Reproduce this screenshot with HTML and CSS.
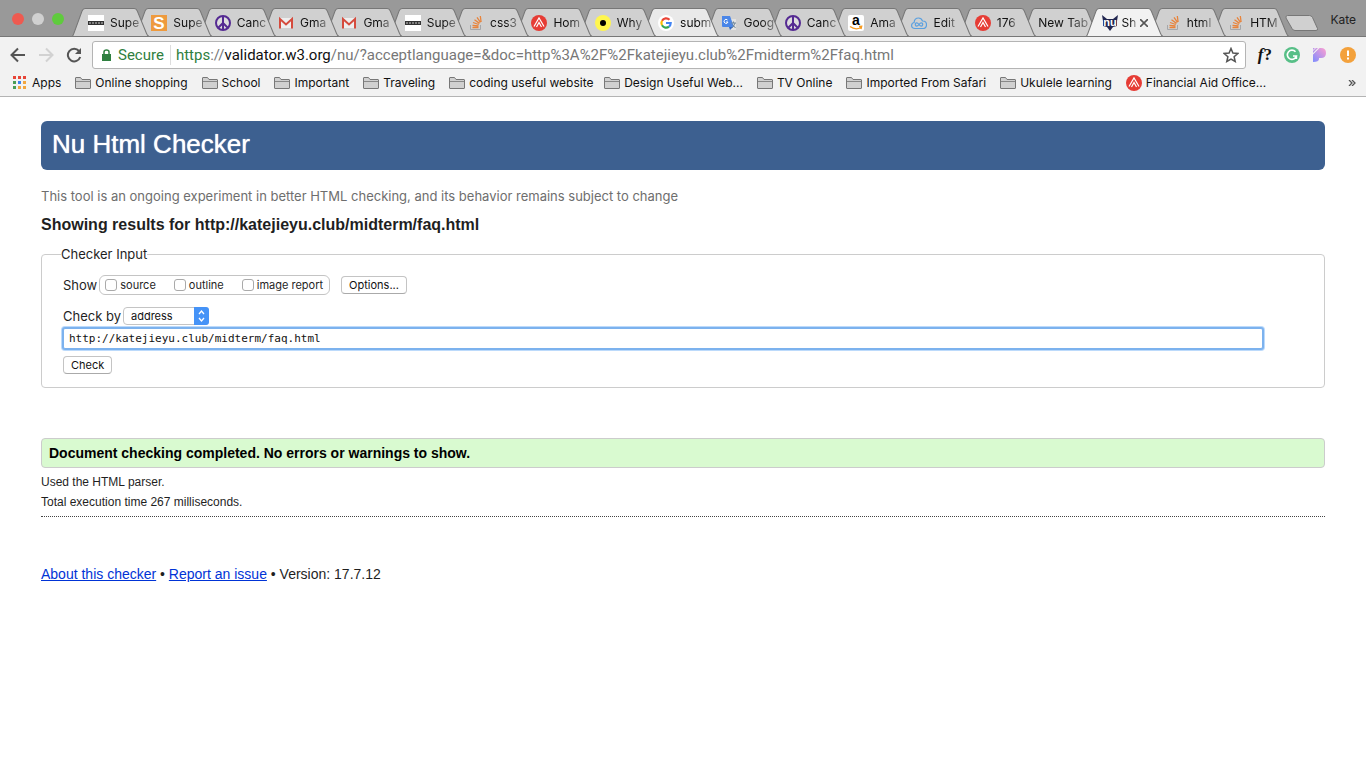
FILE: index.html
```html
<!DOCTYPE html>
<html lang="en">
<head>
<meta charset="utf-8">
<title>Showing results - Nu Html Checker</title>
<link rel="stylesheet" href="styles.css">
</head>
<body>
<svg class="defs" aria-hidden="true">
  <defs>
    <linearGradient id="pgrad" x1="1" y1="0" x2="0" y2="1"><stop offset="0" stop-color="#ff9fd0"/><stop offset="1" stop-color="#7d8cff"/></linearGradient>
    <symbol id="shape" viewBox="0 0 77 29" preserveAspectRatio="none"><path d="M0 28.500Q1 28 2 25L10 3Q11 .5 13 .5H62Q64 .5 65 3L74 25Q75 28 77 28.500Z"/></symbol>
    <symbol id="bars" viewBox="0 0 16 16"><path fill="#fff" d="M0 0h16v16H0z"/><path fill="#333" d="M0 6h16v4H0z"/><path stroke="#ccc" stroke-dasharray="2 1" d="M1 8h14"/></symbol>
    <symbol id="peace" viewBox="0 0 16 16"><circle cx="8" cy="8" r="7" fill="#ddd" stroke="#552a92" stroke-width="2"/><path d="M8 1v14M8 8l-5 5M8 8l5 5" stroke="#552a92" stroke-width="2" fill="none"/></symbol>
    <symbol id="gmail" viewBox="0 0 16 16"><path fill="#eee" d="M1 3h14v10H1z"/><path fill="none" stroke="#d54b3d" stroke-width="2" d="M2 13.500V4l6 5.500L14 4v9.500"/></symbol>
    <symbol id="stack" viewBox="0 0 16 16"><path fill="none" stroke="#a5a7aa" d="M2.500 10v4.500h10V10"/><path fill="none" stroke="#e8833a" stroke-width="1.300" d="M4.500 12.500h6M4.500 10.300l6 .7M5 7.500l5.800 2M6.500 4.800l5 3.600M9 2.300l3.500 5M12.300 1l.8 6"/></symbol>
    <symbol id="aau" viewBox="0 0 16 16"><circle cx="8" cy="8" r="8" fill="#e63c35"/><path d="M3 11.500L8 3l5 8.500M5.500 12L8 7.500l2.500 4.500" fill="none" stroke="#fff" stroke-width="1.200"/></symbol>
    <symbol id="folder" viewBox="0 0 16 14"><path fill="#d0d0d0" stroke="#777" d="M.5 12V2Q.5 1.500 1 1.500h4.500L7 3.500h8q.5 0 .5.500v8q0 .5-.5.500H1Q.5 12.500.5 12z"/><path stroke="#888" d="M1 5.500h14"/></symbol>
  </defs>
</svg>
<header class="browser">
  <div class="tabstrip">
    <div class="lights"><i class="red"></i><i class="grey"></i><i class="green"></i></div>
    <nav class="tabs" aria-label="Tabs">
      <a class="tab" href="#"><svg class="shape"><use href="#shape"/></svg><svg class="fav"><use href="#bars"/></svg><span>Supe</span></a>
      <a class="tab" href="#"><svg class="shape"><use href="#shape"/></svg><svg class="fav" viewBox="0 0 16 16"><path fill="#ee9a3e" d="M0 0h16v16H0z"/><text x="8" y="14" class="s-letter">S</text></svg><span>Supe</span></a>
      <a class="tab" href="#"><svg class="shape"><use href="#shape"/></svg><svg class="fav"><use href="#peace"/></svg><span>Canc</span></a>
      <a class="tab" href="#"><svg class="shape"><use href="#shape"/></svg><svg class="fav"><use href="#gmail"/></svg><span>Gma</span></a>
      <a class="tab" href="#"><svg class="shape"><use href="#shape"/></svg><svg class="fav"><use href="#gmail"/></svg><span>Gma</span></a>
      <a class="tab" href="#"><svg class="shape"><use href="#shape"/></svg><svg class="fav"><use href="#bars"/></svg><span>Supe</span></a>
      <a class="tab" href="#"><svg class="shape"><use href="#shape"/></svg><svg class="fav"><use href="#stack"/></svg><span>css3</span></a>
      <a class="tab" href="#"><svg class="shape"><use href="#shape"/></svg><svg class="fav"><use href="#aau"/></svg><span>Hom</span></a>
      <a class="tab" href="#"><svg class="shape"><use href="#shape"/></svg><svg class="fav" viewBox="0 0 16 16"><circle cx="8" cy="8" r="8" fill="#fff64e"/><circle cx="8" cy="8" r="3"/></svg><span>Why</span></a>
      <a class="tab light" href="#"><svg class="shape"><use href="#shape"/></svg><svg class="fav" viewBox="0 0 16 16"><circle cx="8" cy="8" r="8" fill="#fff"/><g fill="none" stroke-width="2.200"><path stroke="#ea4335" d="M4 5.700A4.700 4.700 0 0 1 11.500 4.800"/><path stroke="#fbbc05" d="M4 5.700A4.700 4.700 0 0 0 4 10.300"/><path stroke="#34a853" d="M4 10.300A4.700 4.700 0 0 0 11 11.600"/><path stroke="#4285f4" d="M8 8h4.700Q12.600 10.500 11 11.600"/></g></svg><span>subm</span></a>
      <a class="tab" href="#"><svg class="shape"><use href="#shape"/></svg><svg class="fav" viewBox="0 0 16 16"><path fill="#e3e3e3" d="M7 4h8v11H9z"/><path fill="#4a86e8" d="M1 1h8l4 11H2q-1 0-1-1z"/><path fill="#356ac3" d="M8 12h4l-3 3z"/><path d="M6.500 5A2 2 0 1 0 7 7H5" fill="none" stroke="#fff"/><path stroke="#718799" fill="none" d="M10 8h5M12.500 6.500V8M14 8q-1 3-3 5M11.500 9.500l3 3.500"/></svg><span>Goog</span></a>
      <a class="tab" href="#"><svg class="shape"><use href="#shape"/></svg><svg class="fav"><use href="#peace"/></svg><span>Canc</span></a>
      <a class="tab" href="#"><svg class="shape"><use href="#shape"/></svg><svg class="fav" viewBox="0 0 16 16"><rect width="16" height="16" rx="2" fill="#fff"/><text x="8" y="10" class="a-letter">a</text><path d="M2 11.500q5.500 4 11 1M11 11.500l2.700-.2-.7 2.700" fill="none" stroke="#f79a1e" stroke-width="1.300"/></svg><span>Ama</span></a>
      <a class="tab" href="#"><svg class="shape"><use href="#shape"/></svg><svg class="fav" viewBox="0 0 16 16"><g fill="none" stroke="#5aa0e0" stroke-width="1.200"><path d="M4 13.500q-3.400-.2-3.400-3 0-2.500 2.500-3Q3.500 3 7.500 3q3 0 4 3 4-.2 4 3.700 0 3.500-3.500 3.800z"/><path d="M8 9.500q-1.500-2-3-1.500-1.500 1.200 0 3 1.500.5 3-1.500t3-1.500q1.500 1.200 0 3-1.500.5-3-1.500z"/></g></svg><span>Edit</span></a>
      <a class="tab" href="#"><svg class="shape"><use href="#shape"/></svg><svg class="fav"><use href="#aau"/></svg><span>176</span></a>
      <a class="tab" href="#"><svg class="shape"><use href="#shape"/></svg><span>New Tab</span></a>
      <a class="tab active" href="#" aria-current="page"><svg class="shape"><use href="#shape"/></svg><svg class="fav" viewBox="0 0 16 16"><path fill="#222650" d="M0 0l5 4h6l5-4-1 6v5l-4 1-3 4-3-4-4-1V6z"/><text x="8" y="11" class="nu-letter">nu</text></svg><span>Sh</span><svg class="close" viewBox="0 0 8 8"><path d="M0 0l8 8M8 0L0 8" stroke="#555" stroke-width="1.600"/></svg></a>
      <a class="tab" href="#"><svg class="shape"><use href="#shape"/></svg><svg class="fav"><use href="#stack"/></svg><span>html</span></a>
      <a class="tab" href="#"><svg class="shape"><use href="#shape"/></svg><svg class="fav"><use href="#stack"/></svg><span>HTM</span></a>
    </nav>
    <button class="newtab" aria-label="New tab"><svg viewBox="0 0 34 17"><path fill="#d0d0d0" stroke="#777" d="M2.500.5h22q2 0 3 2l5 11q.5 2-1.500 2H10q-2 0-3-2L1 3Q.5.5 2.500.5z"/></svg></button>
    <span class="user">Kate</span>
  </div>
  <div class="toolbar">
    <div class="history">
      <button aria-label="Back"><svg viewBox="0 0 16 16"><path d="M15 8H2M8 1.500L1.500 8 8 14.500" stroke="#555" stroke-width="2" fill="none"/></svg></button>
      <button aria-label="Forward"><svg viewBox="0 0 16 16"><path d="M1 8h13M8 1.500L14.500 8 8 14.500" stroke="#d2d2d2" stroke-width="2" fill="none"/></svg></button>
      <button aria-label="Reload"><svg viewBox="0 0 16 16"><path d="M13 4A6.300 6.300 0 1 0 14.200 10" stroke="#555" stroke-width="2" fill="none"/><path fill="#555" d="M15 1v6H9z"/></svg></button>
    </div>
    <div class="omnibox">
      <svg class="lock" viewBox="0 0 9 12"><path fill="#2f8040" d="M0 5h9v7H0z"/><path d="M2 5V3q0-2 2.500-2T7 3v2" fill="none" stroke="#2f8040" stroke-width="1.500"/></svg>
      <span class="secure">Secure</span>
      <a class="url" href="#"><b>https</b>://<em>validator.w3.org</em>/nu/?acceptlanguage=&amp;doc=http%3A%2F%2Fkatejieyu.club%2Fmidterm%2Ffaq.html</a>
      <svg class="star" viewBox="0 0 16 16"><path d="M8 1.500l1.900 4.600 4.900.4-3.700 3.200 1.100 4.800L8 12l-4.200 2.500 1.100-4.800L1.200 6.500l4.900-.4z" fill="none" stroke="#555" stroke-width="1.500"/></svg>
    </div>
    <div class="extensions">
      <span class="whatfont"><i>f</i>?</span>
      <svg viewBox="0 0 16 16"><circle cx="8" cy="8" r="8" fill="#57bf87"/><path d="M11.500 4.800A4.600 4.600 0 1 0 12.400 9H9M12.400 9v3" fill="none" stroke="#fff" stroke-width="1.600"/></svg>
      <svg viewBox="0 0 16 16"><path fill="url(#pgrad)" d="M1 7.500L7.500 1H9q5 0 5 5t-5 5H7v1q0 3-6 3zM1 1h2L1 3zM4 1h2L1 6V4z"/></svg>
      <svg viewBox="0 0 16 16"><circle cx="8" cy="8" r="8" fill="#f3a13c"/><path fill="#fff" d="M7 3.500h2V9H7zM7 10.500h2v2H7z"/></svg>
    </div>
  </div>
  <nav class="bookmarks" aria-label="Bookmarks">
    <a class="apps" href="#"><svg viewBox="0 0 16 14"><path fill="#e74538" d="M1 0h3v3H1zM6 0h3v3H6zM11 0h3v3h-3z"/><path fill="#4a9d57" d="M1 5h3v3H1zM1 10h3v3H1z"/><path fill="#3c82f0" d="M6 5h3v3H6z"/><path fill="#f2a640" d="M11 5h3v3h-3zM6 10h3v3H6zM11 10h3v3h-3z"/></svg>Apps</a>
    <a href="#"><svg><use href="#folder"/></svg>Online shopping</a>
    <a href="#"><svg><use href="#folder"/></svg>School</a>
    <a href="#"><svg><use href="#folder"/></svg>Important</a>
    <a href="#"><svg><use href="#folder"/></svg>Traveling</a>
    <a href="#"><svg><use href="#folder"/></svg>coding useful website</a>
    <a href="#"><svg><use href="#folder"/></svg>Design Useful Web...</a>
    <a href="#"><svg><use href="#folder"/></svg>TV Online</a>
    <a href="#"><svg><use href="#folder"/></svg>Imported From Safari</a>
    <a href="#"><svg><use href="#folder"/></svg>Ukulele learning</a>
    <a class="aid" href="#"><svg><use href="#aau"/></svg>Financial Aid Office...</a>
    <button class="more" aria-label="More bookmarks"><svg viewBox="0 0 8 6"><path d="M1 0l3 3-3 3M4 0l3 3-3 3" fill="none" stroke="#555" stroke-width="1.300"/></svg></button>
  </nav>
</header>
<main class="page">
  <h1>Nu Html Checker</h1>
  <p class="notice">This tool is an ongoing experiment in better HTML checking, and its behavior remains subject to change</p>
  <h2>Showing results for http://katejieyu.club/midterm/faq.html</h2>
  <form>
    <fieldset class="checker">
      <legend>Checker Input</legend>
      <div class="row show">
        <span>Show</span>
        <div class="options">
          <label><input type="checkbox">source</label>
          <label><input type="checkbox">outline</label>
          <label><input type="checkbox">image report</label>
        </div>
        <button type="button" class="btn">Options...</button>
      </div>
      <div class="row by">
        <label for="method">Check by</label>
        <span class="picker">
          <select id="method"><option>address</option></select>
          <svg viewBox="0 0 15 18"><path fill="#4593f7" d="M0 0h12q3 0 3 3v12q0 3-3 3H0z"/><path d="M5 7l2.500-3L10 7M5 11l2.500 3 2.500-3" fill="none" stroke="#fff" stroke-width="1.300"/></svg>
        </span>
      </div>
      <input class="address" type="text" aria-label="Address" value="http://katejieyu.club/midterm/faq.html">
      <button type="button" class="btn">Check</button>
    </fieldset>
  </form>
  <p class="success">Document checking completed. No errors or warnings to show.</p>
  <div class="details">
    <p>Used the HTML parser.</p>
    <p>Total execution time 267 milliseconds.</p>
  </div>
  <footer><a href="#">About this checker</a> • <a href="#">Report an issue</a> • Version: 17.7.12</footer>
</main>
</body>
</html>
```
FILE: styles.css
```css
* { box-sizing: border-box; }
body { margin: 0; background: #fff; color: #1f1f1f; font-family: "Liberation Sans", Arial, sans-serif; }
button { font: inherit; padding: 0; border: 0; background: none; }
svg { display: block; flex: none; }
.defs { position: absolute; width: 0; height: 0; }

/* Browser chrome */
.browser { font-family: Inter, sans-serif; background: #f2f2f2; border-bottom: 1px solid #b4b4b4; }
.tabstrip { display: flex; height: 37px; background: #999; border-bottom: 1px solid #777; }
.lights { display: flex; gap: 8px; padding: 13px 8px 0 12px; }
.lights i { width: 12px; height: 12px; border-radius: 50%; }
.red { background: #ee5a50; }
.grey { background: #d0d0d0; }
.green { background: #5fcb3d; }
.tabs { display: flex; flex: 1; min-width: 0; padding: 8px 14px 0 0; height: 37px; isolation: isolate; }
.tab { position: relative; display: flex; align-items: center; flex: 1 1 0; min-width: 0; margin-right: -14px; padding: 0 8px 0 16px; gap: 6px; color: #111; font-size: 12px; text-decoration: none; }
.tab .shape { position: absolute; left: 0; top: 0; z-index: -1; width: 100%; height: 29px; fill: #d0d0d0; stroke: #777; }
.tab.light .shape { fill: #e9e9e9; }
.tab.active .shape { fill: #f2f2f2; }
.fav { width: 16px; height: 16px; }
.tab span { white-space: nowrap; -webkit-mask-image: linear-gradient(to right, #000 60%, rgba(0, 0, 0, .4)); mask-image: linear-gradient(to right, #000 60%, rgba(0, 0, 0, .4)); }
.tab.active { gap: 4px; }
.close { width: 8px; height: 8px; }
.tab:nth-child(1) { z-index: 19; }
.tab:nth-child(2) { z-index: 18; }
.tab:nth-child(3) { z-index: 17; }
.tab:nth-child(4) { z-index: 16; }
.tab:nth-child(5) { z-index: 15; }
.tab:nth-child(6) { z-index: 14; }
.tab:nth-child(7) { z-index: 13; }
.tab:nth-child(8) { z-index: 12; }
.tab:nth-child(9) { z-index: 11; }
.tab:nth-child(10) { z-index: 10; }
.tab:nth-child(11) { z-index: 9; }
.tab:nth-child(12) { z-index: 8; }
.tab:nth-child(13) { z-index: 7; }
.tab:nth-child(14) { z-index: 6; }
.tab:nth-child(15) { z-index: 5; }
.tab:nth-child(16) { z-index: 4; }
.tab:nth-child(17) { z-index: 20; }
.tab:nth-child(18) { z-index: 2; }
.tab:nth-child(19) { z-index: 1; }
.s-letter { font: bold 17px "Liberation Sans", sans-serif; fill: #fff; text-anchor: middle; }
.a-letter { font: bold 14px "Liberation Sans", sans-serif; text-anchor: middle; }
.nu-letter { font: bold 11px "Liberation Sans", sans-serif; fill: #fff; text-anchor: middle; }
.newtab { margin: 15px 0 0 -4px; height: 17px; }
.newtab svg { width: 34px; height: 17px; }
.user { padding: 12px 10px 0 11px; font-size: 12px; line-height: 16px; color: #222; }

.toolbar { display: flex; align-items: center; height: 36px; padding: 0 10px; gap: 10px; }
.history { display: flex; gap: 12px; }
.toolbar button svg, .extensions svg { width: 16px; height: 16px; }
.omnibox { display: flex; align-items: center; flex: 1; min-width: 0; height: 28px; padding: 0 6px 0 9px; background: #fff; border: 1px solid #b4b4b4; border-radius: 3px; font-family: Roboto, sans-serif; font-size: 15px; }
.lock { width: 9px; height: 12px; }
.secure { margin: 0 5px 0 7px; padding-right: 6px; border-right: 1px solid #ddd; color: #2f8040; line-height: 20px; }
.url { flex: 1; overflow: hidden; white-space: nowrap; color: #777; text-decoration: none; }
.url b { font-weight: 400; color: #2f8040; }
.url em { font-style: normal; color: #111; }
.star { width: 16px; height: 16px; }
.extensions { display: flex; align-items: center; gap: 12px; }
.whatfont { padding-left: 2px; font: bold 17px "Liberation Serif", serif; color: #111; }

.bookmarks { display: flex; align-items: center; gap: 14px; height: 23px; padding: 0 10px 4px 12px; font-size: 12px; }
.bookmarks a { display: flex; align-items: center; gap: 4px; max-width: 141px; color: #111; text-decoration: none; white-space: nowrap; }
.bookmarks a svg { width: 16px; height: 14px; }
.bookmarks .aid svg { height: 16px; }
.more { margin-left: auto; }
.more svg { width: 8px; height: 6px; }

/* Checker page */
.page { padding: 24px 41px; }
h1 { margin: 0 0 16px; padding: 7px 11px 10px; background: #3d6090; border-radius: 6px; color: #fff; font-size: 26px; font-weight: 400; line-height: 32px; text-shadow: 0 0 1px #fff; }
.notice { margin: 0 0 9px; color: #6e6e6e; font: 13px/20px Inter, sans-serif; }
h2 { margin: 0 0 9px; font-size: 16px; line-height: 20px; }
.checker { margin: 0; padding: 11px 61px 13px 21px; border: 1px solid #ccc; border-radius: 4px; font: 13px/20px Inter, sans-serif; }
legend { margin-left: -2px; padding: 0; }
.row { display: flex; align-items: center; }
.show { gap: 2px; margin-bottom: 11px; }
.by { gap: 2px; margin-bottom: 2px; }
.options { display: flex; align-items: center; gap: 18px; height: 20px; padding: 0 6px 0 5px; margin-right: 9px; border: 1px solid #c4c4c4; border-radius: 6px; font-size: 11px; }
.options label { display: flex; align-items: center; gap: 3px; }
.options input { appearance: none; width: 12px; height: 12px; margin: 0; border: 1px solid #aaa; border-radius: 3px; background: #fff; }
.btn { display: block; height: 18px; padding: 0 7px; border: 1px solid #c4c4c4; border-bottom-color: #aaa; border-radius: 4px; background: #fff; color: #111; font-size: 11px; line-height: 16px; }
.picker { display: grid; }
.picker > * { grid-area: 1 / 1; }
.picker select { appearance: none; width: 86px; height: 18px; padding: 0 7px; border: 1px solid #c4c4c4; border-radius: 4px; background: #fff; color: #111; font: 11px Inter, sans-serif; }
.picker svg { justify-self: end; width: 15px; height: 18px; pointer-events: none; }
.address { display: block; width: 100%; height: 21px; margin: 0 0 7px; padding: 0 5px; border: 1px solid #7cb2ee; border-radius: 2px; outline: 0; box-shadow: 0 0 0 1px #7cb2ee, 0 0 0 2px #bcdafb; color: #111; font: 11px "DejaVu Sans Mono", monospace; }
.success { margin: 50px 0 4px; padding: 4px 7px; background: #d9fad0; border: 1px solid #ccc; border-radius: 4px; color: #000; font-size: 14px; font-weight: 700; line-height: 20px; }
.details { padding-bottom: 4px; border-bottom: 1px dotted #444; font-size: 12px; line-height: 20px; }
.details p { margin: 0; }
footer { margin-top: 47px; font-size: 14px; line-height: 20px; }
footer a { color: #0033d6; }
```
